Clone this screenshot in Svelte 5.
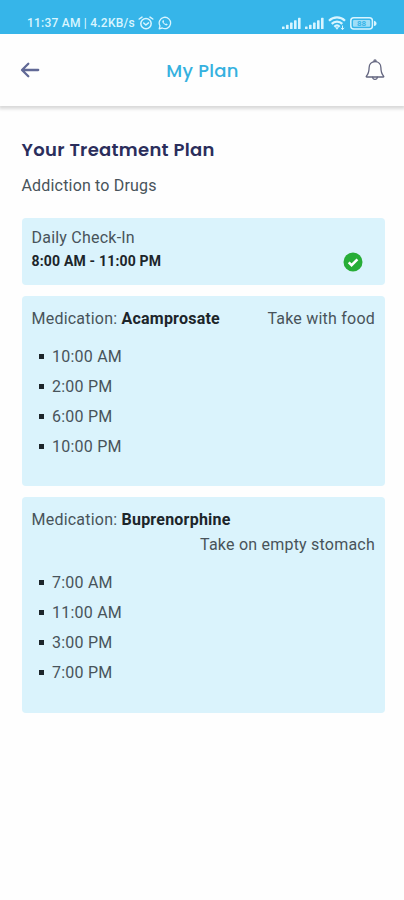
<script lang="ts">
	interface Medication {
		name: string;
		note: string;
		times: string[];
	}

	const medications: Medication[] = [
		{
			name: 'Acamprosate',
			note: 'Take with food',
			times: ['10:00 AM', '2:00 PM', '6:00 PM', '10:00 PM']
		},
		{
			name: 'Buprenorphine',
			note: 'Take on empty stomach',
			times: ['7:00 AM', '11:00 AM', '3:00 PM', '7:00 PM']
		}
	];
</script>

{#snippet signal()}
	<svg class="signal" viewBox="0 0 19 12" width="19" height="12" fill="currentColor">
		<rect x="0" y="9.5" width="2.6" height="2.5" rx="0.6" />
		<rect x="4" y="7.8" width="2.6" height="4.2" rx="0.6" />
		<rect x="8" y="5.6" width="2.6" height="6.4" rx="0.6" />
		<rect x="12" y="3.2" width="2.6" height="8.8" rx="0.6" />
		<rect x="16" y="0.8" width="2.6" height="11.2" rx="0.6" />
	</svg>
{/snippet}

<div class="screen">
	<div class="status-bar">
		<div class="status-left">
			<span>11:37 AM | 4.2KB/s</span>
			<svg class="alarm" viewBox="0 0 16 14" width="16" height="14" fill="none" stroke="currentColor" stroke-width="1.5" stroke-linecap="round" stroke-linejoin="round">
				<circle cx="8" cy="7.6" r="5.2" />
				<path d="M1.2 3 4 1.1M14.8 3 12 1.1M5.7 7l2.2 2 2.6-2.1" />
			</svg>
			<svg class="chat" viewBox="0 0 14 14" width="14" height="14" fill="none" stroke="currentColor" stroke-width="1.3" stroke-linejoin="round">
				<path d="M1.2 12.8 2 9.9A5.7 5.7 0 1 1 4.2 12Z" />
				<path d="M4.9 4.2c-.9.7-.7 2 .5 3.4 1.4 1.6 3 2.3 4 1.4l.3-.8-1.5-.8-.8.6c-.8-.3-1.4-.9-1.8-1.7l.5-.7-.6-1.5Z" fill="currentColor" stroke="none" />
			</svg>
		</div>
		<div class="status-right">
			{@render signal()}
			{@render signal()}
			<svg class="wifi" viewBox="0 0 18 14" width="18" height="14" fill="none" stroke="currentColor" stroke-width="2.2">
				<path d="M1 4.7a11.5 11.5 0 0 1 16 0M3.7 7.9a7.5 7.5 0 0 1 10.6 0M6.3 10.7a4 4 0 0 1 5.4 0" />
				<path d="m9 13.8-2-2.5h4Z" fill="currentColor" stroke="none" />
				<path d="M14.5 9.5v4M12.8 12l1.7 1.5 1.7-1.5" stroke-width="1" />
			</svg>
			<svg class="battery" viewBox="0 0 27 13" width="27" height="13">
				<rect x="0.8" y="0.8" width="21.6" height="11.2" rx="3" fill="none" stroke="currentColor" stroke-width="1.5" />
				<rect x="3" y="3" width="17.2" height="6.8" rx="1" fill="currentColor" opacity="0.65" />
				<path d="M24 3.7c1.6.5 2.5 1.4 2.5 2.7S25.6 8.6 24 9.1Z" fill="currentColor" />
				<text x="11.6" y="9.4" text-anchor="middle">88</text>
			</svg>
		</div>
	</div>

	<header class="app-header">
		<button aria-label="Back">
			<svg viewBox="0 0 20 16" width="20" height="16" fill="none" stroke="#616996" stroke-width="2.3" stroke-linecap="round" stroke-linejoin="round">
				<path d="M18.2 8H2.2M8.3 1.7 2 8l6.3 6.3" />
			</svg>
		</button>
		<h1>My Plan</h1>
		<button aria-label="Notifications">
			<svg viewBox="0 0 20 22" width="20" height="22" fill="none" stroke="#63657f" stroke-width="1.3" stroke-linecap="round" stroke-linejoin="round">
				<path d="M10 2.6c-3.8 0-5.9 2.7-5.9 6.2 0 4.6-.8 6.3-2.7 8.3-.4.5-.2.9.4.9h16.4c.6 0 .8-.4.4-.9-1.9-2-2.7-3.7-2.7-8.3 0-3.5-2.1-6.2-5.9-6.2Z" />
				<path d="M9 2.6V1.8a1 1 0 0 1 2 0v.8M7.7 18.2c.2 2.9 4.4 2.9 4.6 0" />
			</svg>
		</button>
	</header>

	<main>
		<h2>Your Treatment Plan</h2>
		<p class="condition">Addiction to Drugs</p>

		<div class="cards">
			<section class="card check-in">
				<div>
					<p>Daily Check-In</p>
					<strong>8:00 AM - 11:00 PM</strong>
				</div>
				<svg class="done" viewBox="0 0 20 20" width="20" height="20">
					<circle cx="10" cy="10" r="9.5" fill="#27ad37" />
					<path d="m5.7 10.3 2.9 2.9 5.8-5.9" fill="none" stroke="#fff" stroke-width="2.5" />
				</svg>
			</section>

			{#each medications as medication}
				<section class="card medication">
					<div class="medication-head">
						<p>Medication: <b>{medication.name}</b></p>
						<p class="note">{medication.note}</p>
					</div>
					<ul>
						{#each medication.times as time}
							<li>{time}</li>
						{/each}
					</ul>
				</section>
			{/each}
		</div>
	</main>
</div>

<style>
	:global(body) {
		margin: 0;
		background: #fefefe;
	}

	.screen {
		min-height: 900px;
		font-family: Roboto, 'Liberation Sans', sans-serif;
		font-size: 16px;
		letter-spacing: 0.22px;
		color: #48535a;
	}

	h1,
	h2,
	p,
	ul {
		margin: 0;
	}

	.status-bar {
		display: flex;
		justify-content: space-between;
		height: 34px;
		box-sizing: border-box;
		padding: 13px 27px 0 27px;
		background: #36b5e9;
		color: #d9f5ff;
	}

	.status-left,
	.status-right {
		display: flex;
		align-items: center;
		height: 20px;
	}

	.status-left span {
		font-size: 12px;
		font-weight: 500;
		letter-spacing: 0.22px;
		white-space: nowrap;
	}

	.alarm {
		margin-left: 3px;
	}

	.chat {
		margin-left: 4px;
	}

	.signal {
		margin-right: 4px;
	}

	.battery {
		margin-left: 4px;
	}

	.battery text {
		fill: #36b5e9;
		font-size: 8px;
		font-weight: 700;
		letter-spacing: 0;
	}

	.app-header {
		display: flex;
		align-items: center;
		justify-content: space-between;
		height: 72px;
		padding: 0 19px 0 20px;
		background: #fefefe;
		box-shadow: 0 2px 3px 1px #dadada;
	}

	.app-header button {
		display: flex;
		padding: 0;
		border: 0;
		background: none;
	}

	h1,
	h2 {
		font-family: Poppins, Inter, Roboto, sans-serif;
	}

	h1 {
		font-size: 18px;
		font-weight: 500;
		letter-spacing: 0.3px;
		color: #35b1df;
	}

	.status-bar {
		position: relative;
		z-index: 1;
	}

	main {
		padding: 31px 19px 0 21.5px;
	}

	h2 {
		font-size: 18px;
		font-weight: 600;
		line-height: 26px;
		letter-spacing: 0.3px;
		color: #2b2e5c;
	}

	.condition {
		margin-top: 13px;
		line-height: 20px;
		letter-spacing: 0.18px;
	}

	.cards {
		display: flex;
		flex-direction: column;
		gap: 10.5px;
		margin-top: 22.3px;
	}

	.card {
		box-sizing: border-box;
		padding: 10px;
		border-radius: 4px;
		background: #daf3fc;
	}

	.check-in {
		display: flex;
		justify-content: space-between;
		height: 67px;
		line-height: 20px;
	}

	.check-in strong {
		display: block;
		margin-top: 3px;
		font-size: 14px;
		font-weight: 700;
		letter-spacing: 0.18px;
		color: #1c252a;
	}

	.done {
		margin: 24px 12px 0 0;
	}

	.medication {
		padding: 10.5px 10px 25px;
	}

	.medication-head {
		display: flex;
		flex-wrap: wrap;
		justify-content: space-between;
		line-height: 25px;
	}

	.medication b {
		color: #1c252a;
	}

	.note {
		margin-left: auto;
	}

	ul {
		padding: 10.5px 0 0 20.5px;
		list-style: none;
	}

	li {
		display: flex;
		align-items: center;
		line-height: 29.9px;
	}

	li::before {
		content: '';
		width: 5px;
		height: 5px;
		margin: 0 8px 0 -13px;
		background: #1c252a;
	}
</style>
